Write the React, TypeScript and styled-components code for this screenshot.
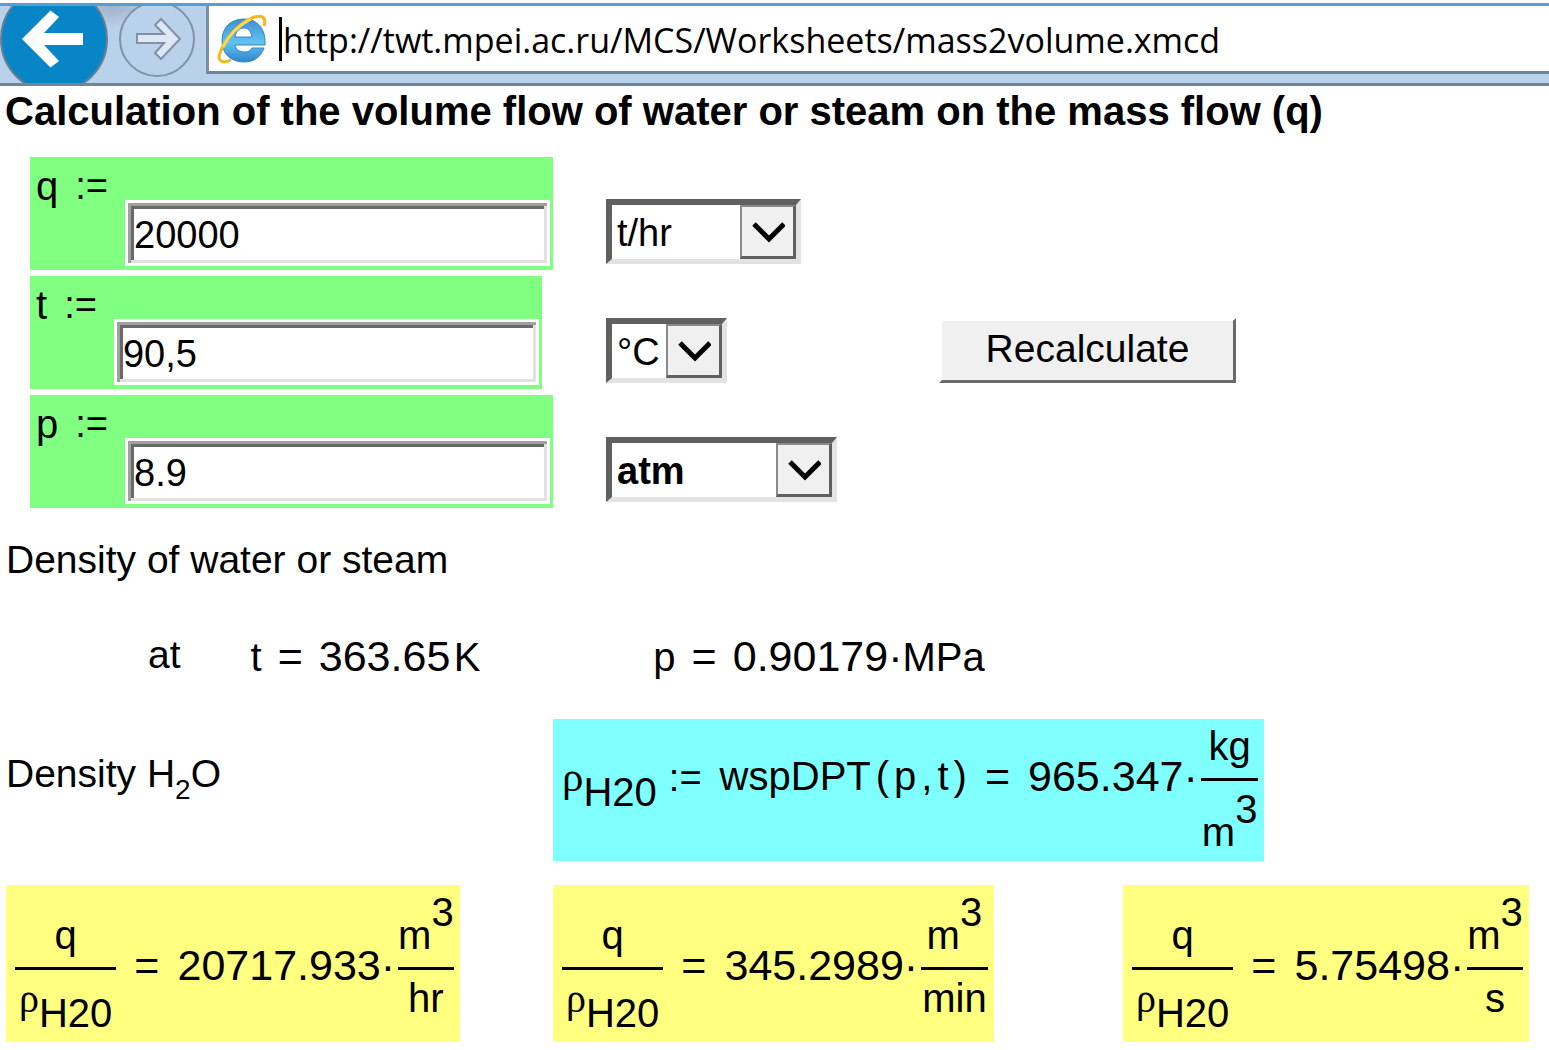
import React from "react";
import styled, { createGlobalStyle } from "styled-components";

const GlobalStyle = createGlobalStyle`
  *, *::before, *::after { box-sizing: border-box; }
  body {
    margin: 0;
    background: #fff;
    color: #000;
    font-family: "Liberation Sans", Arial, Helvetica, sans-serif;
  }
  input, select, button { font-family: inherit; color: inherit; margin: 0; border-radius: 0; }
`;

/* ---------- browser bar ---------- */

const BrowserBar = styled.header`
  display: flex;
  align-items: stretch;
  height: 83px;
  margin-top: 3px;
  border-top: 3px solid #5b9bd5;
  border-bottom: 3px solid #6f8598;
  background: #bad1eb;
  overflow: hidden;
`;

const NavButtons = styled.nav`
  display: flex;
  align-items: center;
  gap: 10px;
  padding-right: 10px;
  background: radial-gradient(ellipse 40px 22px at 112px 0, #9fb1c8, #bad1eb);
`;

const NavButton = styled.button<{ $size: number }>`
  flex: none;
  width: ${(p) => p.$size}px;
  height: ${(p) => p.$size}px;
  margin: -20px 0 -8px;
  padding: 0;
  border: 0;
  background: none;

  svg { display: block; width: 100%; height: 100%; }
`;

const AddressBox = styled.div`
  display: flex;
  flex: 1;
  align-items: center;
  min-width: 0;
  height: 68px;
  padding-left: 8px;
  border-left: 3px solid #7b8ea3;
  border-bottom: 3px solid #6f8598;
  background: #fff;
`;

const SiteIcon = styled.svg`
  flex: none;
  width: 50px;
  height: 50px;
`;

const Caret = styled.span`
  flex: none;
  width: 3px;
  height: 44px;
  margin-left: 12px;
  background: #000;
`;

const AddressInput = styled.input`
  flex: 1;
  min-width: 0;
  padding: 3px 0 0 1px;
  border: 0;
  outline: 0;
  background: none;
  font-family: "Open Sans", "Noto Sans", sans-serif;
  font-size: 34px;
  line-height: 46px;
`;

/* ---------- worksheet ---------- */

const Title = styled.h1`
  margin: 0;
  padding-left: 5px;
  font-size: 40px;
  line-height: 50px;
`;

const Form = styled.form`
  display: grid;
  grid-template-columns: 576px 333px 1fr;
  row-gap: 6px;
  margin-top: 21px;
  padding-left: 30px;
`;

const Definition = styled.div`
  display: flex;
  justify-self: start;
  height: 113px;
  padding: 6px 3px 4px 6px;
  background: #80ff80;
`;

const DefinitionLabel = styled.label`
  display: flex;
  gap: 17px;
  padding-right: 17px;
  font-size: 40px;
  line-height: 46px;
`;

const ValueInput = styled.input`
  align-self: flex-end;
  width: 425px;
  height: 66px;
  padding: 4px 9px 0 6px;
  border: 3px solid #fff;
  outline: 0;
  background: #fff;
  box-shadow:
    inset 3px 3px #a0a0a0,
    inset -3px -3px #e3dfe3,
    inset 6px 6px #696969;
  font-size: 38px;
`;

const UnitCell = styled.div`
  display: flex;
  align-items: flex-end;
  padding-bottom: 6px;
`;

const SelectBox = styled.div<{ $width: number }>`
  display: grid;
  width: ${(p) => p.$width}px;
  height: 65px;
  border: solid;
  border-width: 6px 5px 5px 6px;
  border-color: #606060 #e3e3e3 #e3e3e3 #606060;

  > * { grid-area: 1 / 1; }
`;

const UnitSelect = styled.select<{ $bold?: boolean }>`
  appearance: none;
  min-width: 0;
  padding: 2px 0 0 5px;
  border: 0;
  outline: 0;
  background: #fff;
  font-size: 38px;
  font-weight: ${(p) => (p.$bold ? 700 : 400)};
`;

const SelectArrow = styled.span`
  display: flex;
  align-items: center;
  justify-content: center;
  justify-self: end;
  width: 56px;
  border: solid;
  border-width: 2px 3px 3px 2px;
  border-color: #8a8a8a #606060 #606060 #8a8a8a;
  background: #f0f0f0;
  pointer-events: none;
`;

const RecalculateButton = styled.button`
  width: 297px;
  height: 65px;
  padding: 0 0 4px;
  border: solid;
  border-width: 3px;
  border-color: #fff #696969 #696969 #fff;
  background: #f0f0f0;
  font-size: 39px;
`;

const Text = styled.p`
  margin: 0;
  padding-left: 6px;
  font-size: 39px;
  line-height: 46px;
`;

const DensityHeading = styled(Text)`
  margin-top: 29px;
`;

const Conditions = styled.div`
  display: flex;
  align-items: flex-start;
  margin-top: 49px;
  padding-left: 142px;
`;

const Equation = styled.div<{ $start: number }>`
  display: flex;
  align-items: baseline;
  gap: 16px;
  margin-left: ${(p) => p.$start}px;
  font-size: 43px;
  line-height: 48px;
`;

const Results = styled.div`
  display: grid;
  grid-template-columns: minmax(0, 547fr) minmax(0, 570fr) minmax(0, 426fr);
  row-gap: 24px;
  margin-top: 38px;
  padding: 0 0 8px 6px;
`;

const DensityLabel = styled(Text)`
  padding: 32px 0 0;
`;

/* Three rows: above the fraction bar, the bar itself, below the bar. */
const Formula = styled.div<{ $color: string; $wide?: boolean }>`
  display: grid;
  grid-template-rows: auto 3px auto;
  grid-auto-flow: column;
  justify-self: start;
  grid-column: ${(p) => (p.$wide ? "span 2" : "auto")};
  padding: 4px 6px 6px 9px;
  background: ${(p) => p.$color};
  white-space: nowrap;
`;

const Term = styled.span<{ $gap?: number }>`
  grid-row: 2;
  align-self: center;
  height: 48px;
  margin-bottom: 8px;
  margin-left: ${(p) => p.$gap ?? 0}px;
  font-size: 43px;
  line-height: 48px;
`;

const FractionBox = styled.span<{ $gap?: number }>`
  display: grid;
  grid-row: 1 / 4;
  grid-template-rows: subgrid;
  margin-left: ${(p) => p.$gap ?? 0}px;
  font-size: 40px;
  line-height: 46px;
  text-align: center;
`;

const Numerator = styled.span`
  align-self: end;
  padding-bottom: 9px;
`;

const Bar = styled.span`
  background: #000;
`;

const Denominator = styled.span<{ $inset: number }>`
  padding: 5px ${(p) => p.$inset}px 0;
`;

const Name = styled.span`
  font-size: 40px;
`;

const Assign = styled.span`
  font-size: 38px;
`;

const Call = styled.span`
  display: flex;
  gap: 5px;
  font-size: 40px;
`;

const Rho = styled.span`
  font-family: "Liberation Serif", "Times New Roman", serif;
`;

const Raised = styled.sup`
  font-size: 40px;
  vertical-align: 23px;
`;

const Lowered = styled.sub`
  font-size: 40px;
  line-height: 46px;
  vertical-align: -15px;
`;

const SmallSub = styled.sub`
  font-size: 28px;
  line-height: 28px;
  vertical-align: -12px;
`;

const RhoH2O = () => (
  <>
    <Rho>ρ</Rho>
    <Lowered>H20</Lowered>
  </>
);

const CubicMetre = () => (
  <>
    m<Raised>3</Raised>
  </>
);

function Fraction(props: {
  top: React.ReactNode;
  bottom: React.ReactNode;
  gap?: number;
  inset?: number;
}) {
  return (
    <FractionBox $gap={props.gap}>
      <Numerator>{props.top}</Numerator>
      <Bar />
      <Denominator $inset={props.inset ?? 1}>{props.bottom}</Denominator>
    </FractionBox>
  );
}

function UnitPicker(props: { label: string; width: number; options: string[]; bold?: boolean }) {
  return (
    <UnitCell>
      <SelectBox $width={props.width}>
        <UnitSelect aria-label={props.label} $bold={props.bold} defaultValue={props.options[0]}>
          {props.options.map((o) => (
            <option key={o}>{o}</option>
          ))}
        </UnitSelect>
        <SelectArrow>
          <svg width="34" height="24" viewBox="0 0 34 24" aria-hidden="true">
            <path d="M3 4 L18 19 L33 4" fill="none" stroke="#000" strokeWidth="5" />
          </svg>
        </SelectArrow>
      </SelectBox>
    </UnitCell>
  );
}

function VariableInput(props: { name: string; value: string }) {
  const id = `value-${props.name}`;
  return (
    <Definition>
      <DefinitionLabel htmlFor={id}>
        <span>{props.name}</span>
        <Assign>:=</Assign>
      </DefinitionLabel>
      <ValueInput id={id} type="text" defaultValue={props.value} />
    </Definition>
  );
}

function FlowResult(props: { value: string; per: string }) {
  return (
    <Formula $color="#ffff80">
      <Fraction inset={4} top="q" bottom={<RhoH2O />} />
      <Term $gap={18}>=</Term>
      <Term $gap={18}>{props.value}·</Term>
      <Fraction gap={3} top={<CubicMetre />} bottom={props.per} />
    </Formula>
  );
}

export default function App() {
  return (
    <>
      <GlobalStyle />
      <BrowserBar>
        <NavButtons aria-label="History">
          <NavButton $size={108} type="button" aria-label="Back">
            <svg viewBox="0 0 108 108">
              <circle cx="54" cy="54" r="53" fill="#0885c7" stroke="#6b7f92" strokeWidth="2" />
              <path
                d="M22 54 L50.5 25.5 L59 32 L44 48 H83 V60 H44 L59 76 L50.5 82.5 Z"
                fill="#fff"
              />
            </svg>
          </NavButton>
          <NavButton $size={78} type="button" aria-label="Forward">
            <svg viewBox="0 0 78 78">
              <circle cx="39" cy="39" r="37" fill="#bad1eb" stroke="#8093a8" strokeWidth="2" />
              <path
                d="M19 34 H46 L37 25 L43 19 L62 39 L43 59 L37 53 L46 43 H19 Z"
                fill="#dce8f6"
                stroke="#8292a6"
                strokeWidth="2"
              />
            </svg>
          </NavButton>
        </NavButtons>
        <AddressBox>
          <SiteIcon viewBox="0 0 50 50" aria-hidden="true">
            <defs>
              <linearGradient id="globe" x1="0" y1="0" x2="0" y2="1">
                <stop offset="0" stopColor="#3f8fd0" />
                <stop offset="0.55" stopColor="#5fc3f2" />
                <stop offset="1" stopColor="#2f86cc" />
              </linearGradient>
            </defs>
            <path
              d="M48 31 H18 C19 36 23 38 28 38 C31 38 33 37 35 34 H47 C44 43 37 48 27 48 C13 48 5 39 5 27 C5 13 14 5 27 5 C40 5 49 14 48 31 Z M18 23 H35 C34 17 31 14 27 14 C22 14 19 17 18 23 Z"
              fill="url(#globe)"
              stroke="#3a86c4"
              strokeWidth="1"
            />
            <path
              d="M14 46 C5 50 0 47 3 39 C8 25 21 10 35 4 C44 0 50 3 47 12"
              fill="none"
              stroke="#f6b81a"
              strokeWidth="3"
            />
            <path d="M6 33 C12 21 22 11 34 5" fill="none" stroke="#ffd84a" strokeWidth="3" />
          </SiteIcon>
          <Caret />
          <AddressInput
            type="text"
            aria-label="Address"
            defaultValue="http://twt.mpei.ac.ru/MCS/Worksheets/mass2volume.xmcd"
          />
        </AddressBox>
      </BrowserBar>

      <main>
        <Title>Calculation of the volume flow of water or steam on the mass flow (q)</Title>

        <Form onSubmit={(e) => e.preventDefault()}>
          <VariableInput name="q" value="20000" />
          <UnitPicker label="Unit of q" width={195} options={["t/hr", "kg/s"]} />
          <span />

          <VariableInput name="t" value="90,5" />
          <UnitPicker label="Unit of t" width={121} options={["°C", "K"]} />
          <UnitCell>
            <RecalculateButton type="submit">Recalculate</RecalculateButton>
          </UnitCell>

          <VariableInput name="p" value="8.9" />
          <UnitPicker label="Unit of p" width={231} options={["atm", "MPa"]} bold />
          <span />
        </Form>

        <DensityHeading>Density of water or steam</DensityHeading>

        <Conditions>
          <Text>at</Text>
          <Equation $start={70}>
            <Name>t</Name>
            <span>=</span>
            <span>
              363.65<Name>&#8202;K</Name>
            </span>
          </Equation>
          <Equation $start={173}>
            <Name>p</Name>
            <span>=</span>
            <span>
              0.90179·<Name>MPa</Name>
            </span>
          </Equation>
        </Conditions>

        <Results>
          <DensityLabel>
            Density H<SmallSub>2</SmallSub>O
          </DensityLabel>
          <Formula $color="#80ffff" $wide>
            <Term>
              <RhoH2O />
            </Term>
            <Term $gap={12}>
              <Assign>:=</Assign>
            </Term>
            <Term $gap={18}>
              <Call>
                <span>wspDPT</span>
                <span>(</span>
                <span>p</span>
                <span>,</span>
                <span>t</span>
                <span>)</span>
              </Call>
            </Term>
            <Term $gap={18}>=</Term>
            <Term $gap={18}>965.347·</Term>
            <Fraction gap={3} top="kg" bottom={<CubicMetre />} />
          </Formula>

          <FlowResult value="20717.933" per="hr" />
          <FlowResult value="345.2989" per="min" />
          <FlowResult value="5.75498" per="s" />
        </Results>
      </main>
    </>
  );
}
